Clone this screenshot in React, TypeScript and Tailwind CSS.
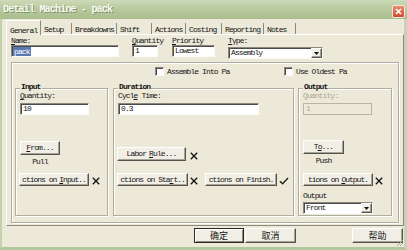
import React from "react";

const raised =
  "bg-[#f1efe5] border border-t-white border-l-white border-r-[#55544e] border-b-[#55544e] shadow-[inset_-1px_-1px_0_#a6a498]";
const sunken =
  "bg-white border border-t-[#8a887e] border-l-[#8a887e] border-r-[#fbfbf8] border-b-[#fbfbf8] shadow-[inset_1px_1px_0_#4a4a46]";
const etched =
  "border border-[#b0ad9e] shadow-[inset_1px_1px_0_#ffffff,1px_1px_0_#ffffff]";

function XMark() {
  return (
    <svg width="8" height="8" viewBox="0 0 8 8" className="shrink-0">
      <path d="M0.8 0.8L7.2 7.2M7.2 0.8L0.8 7.2" stroke="#111" strokeWidth="1.3" />
    </svg>
  );
}

function CheckMark() {
  return (
    <svg width="10" height="8" viewBox="0 0 10 8" className="shrink-0">
      <path d="M1 4.2L3.6 6.8L9 1" stroke="#222" strokeWidth="1.4" fill="none" />
    </svg>
  );
}

function Arrow() {
  return (
    <div className={`w-[11px] h-full flex items-center justify-center ${raised}`}>
      <svg width="5" height="3" viewBox="0 0 5 3">
        <path d="M0 0H5L2.5 3Z" fill="#111" />
      </svg>
    </div>
  );
}

function Group({ title, className, children }: { title: string; className: string; children: React.ReactNode }) {
  return (
    <div className={`relative h-[128px] flex flex-col pl-[4px] pt-[3px] ${etched} ${className}`}>
      <span className="absolute -top-[6px] left-[4px] px-[1px] bg-[#ece9d8] font-bold leading-[7px]">{title}</span>
      {children}
    </div>
  );
}

const tabs = [
  { t: "General", c: "w-[35px]" },
  { t: "Setup", c: "w-[31px]" },
  { t: "Breakdowns", c: "w-[45px]" },
  { t: "Shift", c: "w-[35px]" },
  { t: "Actions", c: "w-[34px]" },
  { t: "Costing", c: "w-[36px]" },
  { t: "Reporting", c: "w-[42px]" },
  { t: "Notes", c: "w-[32px]" },
];

export default function App() {
  return (
    <div className="w-[407px] h-[250px] flex flex-col overflow-hidden bg-[#ece9d8] text-[8px] leading-[8px] tracking-[-0.9px] text-[#151515] font-['Liberation_Mono',monospace]">
      {/* Title bar */}
      <div className="h-[19px] shrink-0 flex items-start justify-between pl-[3px] pr-[2px] bg-linear-to-b from-[#ccdab8] via-[#b7c99d] to-[#aabd8e]">
        <span className="mt-[5px] text-[10px] leading-[10px] font-bold tracking-[-0.8px] text-[#f8faf3] [text-shadow:1px_1px_0_#7f9467]">
          Detail Machine - pack
        </span>
        <div className="mt-[5px] w-[13px] h-[13px] rounded-[2px] border border-[#f4e8de] bg-linear-to-b from-[#ea8c70] to-[#cd4a2f] flex items-center justify-center">
          <svg width="7" height="7" viewBox="0 0 7 7">
            <path d="M1 1L6 6M6 1L1 6" stroke="white" strokeWidth="1.6" />
          </svg>
        </div>
      </div>

      {/* Body */}
      <div className="relative flex-1 flex flex-col pl-[4px] border-l-2 border-r-[3px] border-b-[3px] border-l-[#c3d2ad] border-r-[#c6d3b2] border-b-[#b3c59a]">
        {/* Tabs */}
        <div className="h-[15px] flex items-end">
          {tabs.map((tab, i) =>
            i === 0 ? (
              <div
                key={tab.t}
                className={`relative z-10 -mb-[1px] h-[15px] pt-[6px] pl-[3px] whitespace-nowrap bg-[#ece9d8] border-l border-t border-r border-l-white border-t-white border-r-[#8b8a80] ${tab.c}`}
              >
                {tab.t}
              </div>
            ) : (
              <div
                key={tab.t}
                className={`h-[11px] pt-[3px] pl-[3px] whitespace-nowrap border-r border-r-[#8b8a80] ${tab.c}`}
              >
                {tab.t}
              </div>
            )
          )}
        </div>

        {/* Tab page */}
        <div className="w-[398px] h-[192px] flex flex-col border border-t-white border-l-white border-r-[#8a887c] border-b-[#8a887c]">
          {/* Top fields */}
          <div className="flex pl-[4px] pt-[2px]">
            <div className="w-[108px] flex flex-col">
              <span className="h-[8px]"><span className="underline">N</span>ame:</span>
              <div className={`h-[12px] flex items-center pl-[1px] ${sunken}`}>
                <span className="bg-[#5a78b2] text-white px-[1px] leading-[9px]">pack</span>
              </div>
            </div>
            <div className="ml-[13px] w-[26px] flex flex-col">
              <span className="h-[8px] whitespace-nowrap"><span className="underline">Q</span>uantity</span>
              <div className={`h-[12px] flex items-center pl-[2px] ${sunken}`}>1</div>
            </div>
            <div className="ml-[14px] w-[43px] flex flex-col">
              <span className="h-[8px] whitespace-nowrap"><span className="underline">P</span>riority</span>
              <div className={`h-[12px] flex items-center pl-[2px] ${sunken}`}>Lowest</div>
            </div>
            <div className="ml-[13px] w-[95px] flex flex-col">
              <span className="h-[8px]"><span className="underline">T</span>ype:</span>
              <div className={`mt-[2px] h-[12px] flex items-center justify-between pl-[2px] ${sunken}`}>
                <span>Assembly</span>
                <Arrow />
              </div>
            </div>
          </div>

          {/* Inner frame */}
          <div className={`mt-[3px] mx-[4px] h-[161px] flex flex-col ${etched}`}>
            {/* Checkboxes */}
            <div className="mt-[4px] h-[9px] flex pl-[143px]">
              <div className="w-[129px] flex items-center">
                <div className={`w-[9px] h-[9px] ${sunken}`} />
                <span className="ml-[3px] whitespace-nowrap">Assemble Into Pa</span>
              </div>
              <div className="flex items-center">
                <div className={`w-[9px] h-[9px] ${sunken}`} />
                <span className="ml-[3px] whitespace-nowrap">Use Oldest Pa</span>
              </div>
            </div>

            {/* Groups */}
            <div className="mt-[12px] flex pl-[3px]">
              <Group title="Input" className="w-[93px]">
                <span className="h-[8px]"><span className="underline">Q</span>uantity:</span>
                <div className={`mt-[3px] w-[69px] h-[12px] flex items-center pl-[2px] ${sunken}`}>10</div>
                <div className={`mt-[26px] w-[40px] h-[14px] flex items-center justify-center ${raised}`}>
                  <span><span className="underline">F</span>rom...</span>
                </div>
                <span className="mt-[3px] w-[40px] h-[8px] text-center">Pull</span>
                <div className="mt-[7px] -ml-[1px] flex items-center">
                  <div className={`w-[70px] h-[13px] flex items-center justify-center whitespace-nowrap tracking-[-1px] ${raised}`}>
                    ctions on <span className="underline ml-[3px]">I</span>nput..
                  </div>
                  <div className="ml-[3px] mt-[2px]"><XMark /></div>
                </div>
              </Group>

              <Group title="Duration" className="ml-[5px] w-[181px]">
                <span className="h-[8px]">Cycl<span className="underline">e</span> Time:</span>
                <div className={`mt-[3px] w-[141px] h-[12px] flex items-center pl-[2px] ${sunken}`}>0.3</div>
                <div className="mt-[32px] -ml-[1px] flex items-center">
                  <div className={`w-[69px] h-[14px] flex items-center justify-center whitespace-nowrap ${raised}`}>
                    Labor <span className="underline ml-[3px]">R</span>ule...
                  </div>
                  <div className="ml-[4px] mt-[3px]"><XMark /></div>
                </div>
                <div className="mt-[12px] -ml-[1px] flex items-center">
                  <div className={`w-[71px] h-[13px] flex items-center justify-center whitespace-nowrap tracking-[-1px] ${raised}`}>
                    ctions on Sta<span className="underline">r</span>t..
                  </div>
                  <div className="ml-[2px] mt-[2px]"><XMark /></div>
                  <div className={`ml-[7px] w-[72px] h-[13px] flex items-center justify-center whitespace-nowrap tracking-[-1px] ${raised}`}>
                    ctions on Finish.
                  </div>
                  <div className="ml-[2px] mt-[2px]"><CheckMark /></div>
                </div>
              </Group>

              <Group title="Output" className="ml-[4px] w-[94px]">
                <span className="h-[8px] text-[#aca899]">Quantity:</span>
                <div className="mt-[3px] w-[69px] h-[12px] flex items-center pl-[2px] bg-[#ece9d8] border border-[#b8b5a8] text-[#aca899]">1</div>
                <div className={`mt-[25px] w-[41px] h-[14px] flex items-center justify-center ${raised}`}>
                  <span>T<span className="underline">o</span>...</span>
                </div>
                <span className="mt-[3px] w-[41px] h-[8px] text-center">Push</span>
                <div className="mt-[8px] flex items-center">
                  <div className={`w-[70px] h-[13px] flex items-center justify-center whitespace-nowrap tracking-[-1px] ${raised}`}>
                    tions on <span className="underline ml-[3px]">O</span>utput.
                  </div>
                  <div className="ml-[2px] mt-[2px]"><XMark /></div>
                </div>
                <span className="mt-[6px] h-[8px]">Output</span>
                <div className={`mt-[2px] w-[70px] h-[12px] flex items-center justify-between pl-[2px] ${sunken}`}>
                  <span>Front</span>
                  <Arrow />
                </div>
              </Group>
            </div>
          </div>
        </div>

        {/* Dialog buttons */}
        <div className="mt-[2px] h-[15px] flex tracking-normal font-['Noto_Sans_CJK_SC',sans-serif] text-[9px] leading-[9px]">
          <div className="ml-[188px] w-[50px] h-[15px] flex items-center justify-center bg-[#f1efe5] border border-[#2a2a28] shadow-[inset_1px_1px_0_#fff,inset_-1px_-1px_0_#8a887e]">
            确定
          </div>
          <div className={`ml-[1px] w-[51px] h-[15px] flex items-center justify-center ${raised}`}>取消</div>
          <div className={`ml-[56px] w-[51px] h-[15px] flex items-center justify-center ${raised}`}>帮助</div>
        </div>

        {/* Resize grip */}
        <svg width="8" height="8" viewBox="0 0 8 8" className="absolute right-0 bottom-0">
          <path d="M7 1L1 7M7 4L4 7" stroke="#a9a796" strokeWidth="1" />
        </svg>
      </div>
    </div>
  );
}
